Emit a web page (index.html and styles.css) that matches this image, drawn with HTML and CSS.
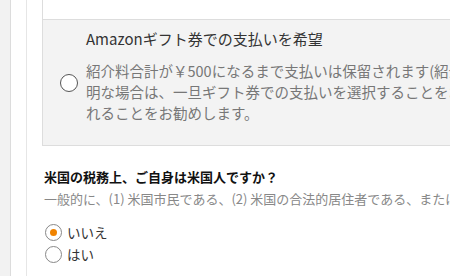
FILE: index.html
```html
<!DOCTYPE html>
<html lang="ja">
<head>
<meta charset="utf-8">
<link rel="stylesheet" href="styles.css">
</head>
<body>
<div class="page">
  <div class="inner">
    <div class="options">
      <div class="option option-prev"></div>
      <div class="option option-gift">
        <span class="radio radio-big"></span>
        <div class="option-text">
          <div class="option-title">Amazonギフト券での支払いを希望</div>
          <div class="option-desc">紹介料合計が￥500になるまで支払いは保留されます(紹介料の合計金額が不<br>明な場合は、一旦ギフト券での支払いを選択することをお勧めします。その後変更さ<br>れることをお勧めします。</div>
        </div>
      </div>
    </div>
    <div class="question">
      <div class="q-title">米国の税務上、ご自身は米国人ですか？</div>
      <div class="q-sub">一般的に、(1) 米国市民である、(2) 米国の合法的居住者である、または (3) 米国で設立された</div>
      <div class="choices">
        <label class="choice"><span class="radio radio-on"></span><span>いいえ</span></label>
        <label class="choice"><span class="radio"></span><span>はい</span></label>
      </div>
    </div>
  </div>
</div>
</body>
</html>
```

FILE: styles.css
```css
html, body {
  margin: 0;
  padding: 0;
  overflow: hidden;
  width: 450px;
  height: 276px;
}
body {
  background: #f2f2f2;
  font-family: "Noto Sans CJK JP", "Noto Sans", sans-serif;
  color: #333;
}
.page {
  margin-left: 10px;
  border-left: 1px solid #dcdcdc;
  background: #fff;
  padding-left: 15px;
  height: 276px;
}
.inner {
  border-left: 1px solid #e6e6e6;
  padding-left: 15px;
  height: 276px;
}
.options {
  margin-right: -60px;
}
.option {
  border: 1px solid #dddddd;
  box-sizing: border-box;
}
.option-prev {
  height: 19px;
  border-top: none;
  border-bottom: none;
  background: #fff;
}
.option-gift {
  display: flex;
  background: #f3f3f3;
  padding-left: 17px;
}
.radio {
  display: inline-block;
  box-sizing: border-box;
  width: 17px;
  height: 17px;
  border: 1px solid #888;
  border-radius: 50%;
  background: #fff;
  flex: none;
  position: relative;
}
.radio-big {
  align-self: center;
  width: 18px;
  height: 18px;
  border: 1.5px solid #555;
  margin-right: 8px;
}
.radio-on::after {
  content: "";
  position: absolute;
  left: 4px;
  top: 4px;
  width: 7px;
  height: 7px;
  border-radius: 50%;
  background: #f08300;
}
.option-text {
  padding: 8px 0 22px 0;
  white-space: nowrap;
}
.option-title {
  font-size: 15px;
  line-height: 22px;
  color: #333;
}
.option-desc {
  margin-top: 10px;
  font-size: 14.5px;
  line-height: 21px;
  color: #777;
}
.question {
  margin-top: 21px;
  padding-left: 2px;
  white-space: nowrap;
}
.q-title {
  font-size: 13px;
  line-height: 20px;
  font-weight: 700;
  color: #111;
}
.q-sub {
  margin-top: 2px;
  font-size: 13px;
  line-height: 20px;
  color: #888;
}
.choices {
  margin-top: 12px;
  display: flex;
  flex-direction: column;
}
.choice {
  display: flex;
  align-items: center;
  height: 22px;
  font-size: 13.5px;
  color: #333;
  gap: 5px;
  padding-left: 1px;
}
```
